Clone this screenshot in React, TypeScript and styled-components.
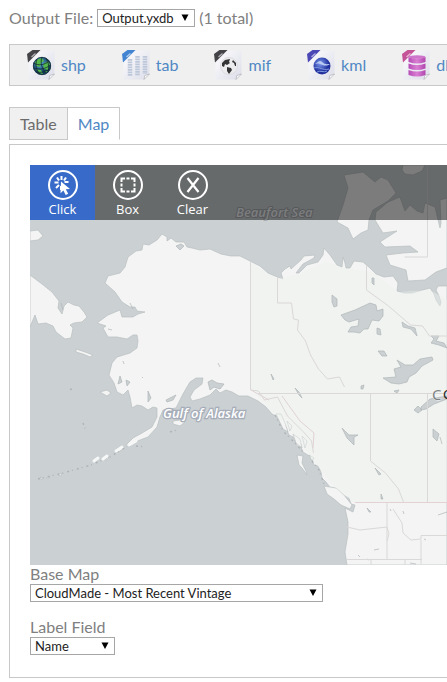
import React from "react";
import styled, { createGlobalStyle } from "styled-components";

const GlobalStyle = createGlobalStyle`
  * { box-sizing: border-box; }
  html, body { margin: 0; background: #fff; }
  body { font-family: Lato, "Liberation Sans", sans-serif; font-size: 16px; line-height: 20px; color: #808080; }
`;

const Page = styled.main`
  padding: 8px 0 4px 9px;
  overflow: hidden;
`;

const FileRow = styled.div`
  display: flex;
  align-items: center;
  gap: 4px;
  height: 20px;
  white-space: nowrap;
`;

const SelectBox = styled.span<{ $width: number }>`
  display: grid;
  grid-template-columns: 1fr 8px;
  align-items: center;
  width: ${(p) => p.$width}px;
  height: 18px;
  padding-right: 5px;
  border: 1px solid #a6a6a6;
  background: #fff;

  select {
    grid-area: 1 / 1 / 2 / 3;
    width: 100%;
    height: 16px;
    padding: 0 4px;
    border: 0;
    appearance: none;
    background: transparent;
    color: #222;
    font: 13px/16px Lato, "Liberation Sans", sans-serif;
  }
  svg {
    grid-area: 1 / 2;
    pointer-events: none;
  }
`;

const Downloads = styled.nav`
  display: flex;
  gap: 36px;
  align-items: center;
  height: 42px;
  margin-top: 16px;
  padding-left: 17px;
  border: 1px solid #c8c8c8;
  border-right: 0;
  background: #f0f0f0;
`;

const Download = styled.a`
  display: flex;
  flex: none;
  align-items: center;
  gap: 6px;
  color: #4f88c4;
  text-decoration: none;
`;

const Tabs = styled.div`
  display: flex;
  height: 33px;
  margin-top: 21px;
`;

const Tab = styled.button<{ $active?: boolean }>`
  padding: 0 10px;
  border: 1px solid #c8c8c8;
  border-bottom-color: ${(p) => (p.$active ? "#fff" : "#c8c8c8")};
  background: ${(p) => (p.$active ? "#fff" : "#f0f0f0")};
  color: ${(p) => (p.$active ? "#4f88c4" : "#6b6b6b")};
  font: inherit;
  line-height: 28px;

  & + & { border-left: 0; }
`;

const Panel = styled.section`
  margin-top: 4px;
  padding: 20px 0 22px 20px;
  border: 1px solid #c8c8c8;
  border-right: 0;
`;

const MapView = styled.div`
  position: relative;
  height: 400px;
  overflow: hidden;
  background: #cbd0d3;
`;

const MapDrawing = styled.svg`
  display: block;
  width: 100%;
  height: 100%;
`;

const MapTools = styled.div`
  position: absolute;
  inset: 0 0 auto 0;
  display: flex;
  height: 55px;
  background: rgba(3, 3, 4, 0.5);
`;

const Tool = styled.button<{ $active?: boolean }>`
  display: flex;
  flex-direction: column;
  align-items: center;
  width: 65px;
  padding: 5px 0 0;
  border: 0;
  background: ${(p) => (p.$active ? "#386bc9" : "transparent")};
  color: #fff;
  font: 13px/18px "Open Sans", "Noto Sans", sans-serif;

  svg { flex: none; }
`;

const Field = styled.div`
  display: flex;
  flex-direction: column;
  align-items: flex-start;

  & + & { margin-top: 16px; }
  label { height: 19px; line-height: 17px; }
`;

function Picker({ width, options, ...rest }: { width: number; options: string[]; id: string }) {
  return (
    <SelectBox $width={width}>
      <select {...rest}>
        {options.map((o) => <option key={o}>{o}</option>)}
      </select>
      <svg width="8" height="8" viewBox="0 0 8 8" aria-hidden="true">
        <path d="M0.5 0.5h7L4 7z" fill="#000" />
      </svg>
    </SelectBox>
  );
}

const ribbonColors: Record<string, string> = {
  shp: "#444448", tab: "#4384d2", mif: "#444448", kml: "#4b47b5", dbf: "#c45398",
};

function FileIcon({ kind }: { kind: string }) {
  const id = `page-${kind}`;
  return (
    <svg width="28" height="30" viewBox="0 0 28 30" aria-hidden="true">
      <defs>
        <linearGradient id={id} x1="0" y1="0" x2="1" y2="1">
          <stop offset="0" stopColor="#fdfdff" /><stop offset="1" stopColor="#dcdde8" />
        </linearGradient>
        <radialGradient id={`${id}-ball`} cx=".4" cy=".35">
          <stop offset="0" stopColor={kind === "kml" ? "#7f9cf0" : "#5fb2e8"} />
          <stop offset="1" stopColor={kind === "kml" ? "#202f9c" : "#123c5c"} />
        </radialGradient>
        <linearGradient id={`${id}-disk`}>
          <stop offset="0" stopColor="#b54bb4" /><stop offset=".5" stopColor="#da7fd4" /><stop offset="1" stopColor="#b044ae" />
        </linearGradient>
      </defs>
      <path d="M12 0.5H27.5V24L22 29.5H1.500V11z" fill={`url(#${id})`} />
      <path d="M27.500 24L22 29.500L22.800 25.500z" fill="#fff" stroke="#aeb0b6" strokeWidth=".7" />
      {kind === "shp" && (
        <g>
          <circle cx="15" cy="16" r="9" fill={`url(#${id}-ball)`} />
          <path d="M8 12l3-3 4-1 2 3-3 2-1 4-4-1zM16 14l5-3 2 3-2 6-4-1zM9 19l5 1 2 4-4-1zM18 21l3 0-3 2z" fill="#55b84b" />
          <path d="M6.500 13c5 3 11 2 16-2M6.500 18c6 2 12 1 17-3M9 22c5 1 10 0 13-3M10 9c-2 6-1 11 3 15M15 7c-2 6 0 12 4 16M19 8c3 5 3 9 2 14" fill="none" stroke="#102735" strokeWidth=".8" />
          <circle cx="15" cy="16" r="8.700" fill="none" stroke="#17303d" strokeWidth=".8" />
        </g>
      )}
      {kind === "tab" && (
        <g stroke="#bdc7da" strokeWidth="4.500" strokeDasharray="1.700 .8">
          <path d="M8 9v17M15.500 6v20M23 6v18" />
        </g>
      )}
      {kind === "mif" && (
        <g>
          <circle cx="15" cy="16" r="8.500" fill="#ececef" stroke="#d5d5d9" strokeWidth=".7" />
          <path d="M8 13l3-3 5-1-1 3 1 1-3 2-2-1-1 3-2-1zM13 17l4 1 1 2-3 4-2-3zM19 10l3 3 0 3-1 0-1-3-2-1z" fill="#343437" />
        </g>
      )}
      {kind === "kml" && (
        <g>
          <circle cx="15" cy="16" r="8.500" fill={`url(#${id}-ball)`} />
          <path d="M7 14c3 0 5-5 8-2s5 2 8 2c-4 3-7 1-10 0s-4 0-6 0z" fill="#b9cbf3" />
          <path d="M7 18c5-2 9 3 15 1M10 22c4-2 6 1 10-1" fill="none" stroke="#7f99df" strokeWidth="1" />
        </g>
      )}
      {kind === "dbf" && (
        <g fill={`url(#${id}-disk)`}>
          {[7, 13.500, 20].map((y) => (
            <path key={y} d={`M6.500 ${y}q8.500 3 17 0v5q-8.500 3-17 0z`} />
          ))}
          <ellipse cx="15" cy="7" rx="8.500" ry="1.800" fill="#cf74cb" />
        </g>
      )}
      <path d="M0 4L5.500 0H13.500L1 12.500z" fill={ribbonColors[kind]} />
      <path d="M4.500 7l4-3.500" stroke="#fff" strokeWidth="1.600" opacity=".55" />
    </svg>
  );
}

function ToolIcon({ kind }: { kind: string }) {
  return (
    <svg width="30" height="30" viewBox="0 0 30 30" fill="none" stroke="#fff" aria-hidden="true">
      <circle cx="15" cy="15" r="14" strokeWidth="2" />
      {kind === "Click" && (
        <g>
          <path d="M13.500 6v4M18 7.500l-2 3M20.500 12h-4M9 7.500l2 3M6.500 12.500h4M8 18l3-3M13 20v-4" strokeWidth="2" />
          <path d="M13 11.500l9 7.500-4.200.2 2.400 4.600-2.500 1.200-2.300-4.600-2.900 2.800z" fill="#fff" stroke="none" />
        </g>
      )}
      {kind === "Box" && (
        <path d="M8.500 12V8.500H12M13.500 8.500h3M18 8.500h3.500V12M21.500 13.500v3M21.500 18v3.500H18M16.500 21.500h-3M12 21.500H8.500V18M8.500 16.500v-3" strokeWidth="2" />
      )}
      {kind === "Clear" && <path d="M9.500 8l11 14M20.500 8l-11 14" strokeWidth="2.200" />}
    </svg>
  );
}

function CoastMap() {
  return (
    <MapDrawing viewBox="30 165 417 400" preserveAspectRatio="xMinYMin slice" role="img" aria-label="Map of Alaska and western Canada">
      <g fill="#f3f4f3" stroke="#b9bec0" strokeWidth=".7" strokeLinejoin="round">
        {/* mainland */}
        <path d="M162 234L167 237 167 241 171 238 176 242 184 242 187 247 192 248 200 250 210 249 221 254 231 256 240 256 252 262 260 266 268 273 275 276 283 279 281 273 285 269 290 266 291 269 301 260 304 256 315 255 314 258 303 264 296 273 299 273 307 265 318 262 323 255 324 248 330 255 337 265 342 267 343 257 345 263 346 268 350 268 354 261 363 262 370 268 376 274 384 277 393 276 398 283 397 291 404 293 412 293 430 288 434 294 436 300 440 306 441 302 439 296 436 290 438 286 447 286V565H347L345 552 348 534 348 522 345 508 353 512 355 505 351 504 349 498 339 493 332 490 326 482 322 478 321 472 318 466 314 465 311 457 303 452 301 447 297 446 293 437 289 435 286 428 281 425 276 416 272 414 266 407 258 401 248 396 239 396 232 392 226 390 220 393 216 389 210 395 200 399 192 401 190 397 194 390 202 384 203 378 196 378 190 382 187 387 183 394 179 402 176 408 163 410 160 417 157 427 148 437 140 440 133 443 127 447 127 444 133 438 142 433 152 427 157 417 157 408 153 407 148 410 142 406 137 405 132 408 130 397 128 390 123 395 117 392 114 383 109 375 112 363 117 357 130 353 137 348 138 341 137 335 133 335 127 339 117 337 108 337 103 328 106 326 97 323 108 315 120 310 122 317 133 317 138 314 145 312 137 311 135 307 130 307 122 302 115 292 105 283 108 276 120 273 125 267 128 257 136 251 142 250 143 244 149 245 157 240z" />
        {/* eastern Siberia */}
        <path d="M30 275L42 284 52 292 59 301 58 308 62 314 64 306 68 302 74 305 79 306 84 312 87 317 82 322 74 323 70 325 73 328 71 338 65 339 56 332 53 326 46 323 38 324 35 315 30 327zM30 231L38 230 43 236 38 240 30 241z" />
        {/* Bering islands */}
        <path d="M76 349l9 3 8 3-3 2-7-3-7-2zM100 392l7-2 4 3-4 3zM116 449l6-3 3 2-7 4zM94 460l4-2-2 4zM104 458l5-1-3 4zM40 477l3 1-1 2zM46 478l4-1-2 2zM58 475l4-2-1 3z" />
        <path d="M173 421l7-1 5 2-5 4-7-2z" />
        {/* Arctic islands */}
        <path d="M344 175L363 172 375 182 381 177 388 180 396 193 388 201 373 210 369 220 368 230 361 233 353 239 348 228 337 222 343 205 348 188z" />
        <path d="M403 165h22l-3 6-9 4-8-1-3-4z" />
        <path d="M447 198L440 200 441 223 440 228 435 207 425 203 423 213 417 211 410 205 405 211 400 197 388 202 376 212 375 220 383 233 397 231 383 240 380 242 385 247 410 246 418 252 403 253 386 255 390 265 406 270 408 281 425 280 436 272 447 268z" />
        {/* British Columbia islands */}
        <path d="M324 486l12 2 8 7 8 10-2 4-9-4-7-6-7-5zM297 455l6 1-1 7 4 8 1 4-5-7-3-3zM276 414l5 0 4 9 3 9-5-3zM287 421l5 5-2 5zM293 434l7 5 2 9-6-5zM302 436l5 5-2 7zM309 455l5 3-2 3z" />
      </g>
      <path d="M251 263L276 279 300 274 325 262 347 269 372 272 398 292 430 290 447 300V503H355L337 490 321 470 303 446 281 420 262 401 251 390z" fill="#edf2ee" opacity=".45" />
      {/* lakes and inlets */}
      <g fill="#cbd0d3" stroke="#b0b6b8" strokeWidth=".7" strokeLinejoin="round">
        <path d="M341 315l14-5 15-7 6 2 1 6 6-2 0 7-4 5-7-1-4 9-4 0-4 4-6-1-6 0 3-5 7-1 1-7-10 3-4-2z" />
        <path d="M383 378l13-1-2-8 7-2-4-7 8 5 8 0 7-6 12-2 1 3-11 6-6 7-7 4-2 5-8 2-8-1z" />
        <path d="M414 410l4-4 4 4-4 3zM421 407l9-8 17-3v3l-13 5-8 5-5 1zM378 351l6 0 3 5-5 0zM377 328l3 1 1 6-4-1zM332 295l5 4 0 7-3 1-2-5zM372 278l2 0 0 7-2-2zM402 322l6 4 7 2 2 8-6-7-8-2zM431 336l8 0-3 5 8 2 3 5-8-3-8-2 3-4zM361 386l3-1-1 4-2 0zM394 391l5-1-2 3zM271 374l3 5-1 1zM295 388l4 4 3 6-3-3zM342 428l7 7 9 0-4 2 0 8-7-7zM375 468l6 6-2 1zM433 429l6 5-2 7-4-4zM440 437l2 7M381 494l2 5-2 0zM367 508l4 4-2 0zM390 509l1 2M403 511l1 3M438 515l9-3M424 539l2 1M374 550l5-1M358 555l2 2M367 559l2 1M410 563l6 1" />
        <path d="M176 246l5-2 3 2-4 4zM208 382l4-2 5 3 7 1-4 5-6-2-4 3zM120 376l2 6-4 2zM126 380l4 2-3 4zM148 391l3 7-3 4zM166 400l10-5-3 5-6 2zM218 363l2 4M123 361l1 3M142 377l1 1M61 303l2 7M108 329l4 1M130 303l3 6" />
      </g>
      {/* inland borders */}
      <g fill="none" stroke="#dbd8d8" strokeWidth="1">
        <path d="M250.500 262V390l8 1 6 9 13-3 10 19 17 17 7 8 2 12M258 393.500H447M277.500 277v26h14l2 16 5 1-1 10 8 11 5 14 8 14 9 10 12-2 5 10M366.500 265v25l22 16 22 19 12 1 7 10h17M370.500 393v68l15 12 13 16 5 13M427.500 393v109M347 527l13 3 27-3 0 32M387 503v24l2 7-2 7M393 509l9 14 1 10 8 7 10-1V535.500h26M421 540v24M347 559.500h75M371 560v5M405 560v5M427.500 165v92h-23" />
        <path d="M355 502.500h92M251 390l18 10M282 396l18 25 14 12-1 15" stroke="#e2d2d5" />
      </g>
      {/* chains of small islands */}
      <g fill="none" stroke="#aeb3b5" strokeWidth="1.400" strokeDasharray="2 3 1 4">
        <path d="M38 479l25-6 28-8 19-8 14-9M136 446l9 1M170 432l7-2M70 389l4 1M83 423l3 8" />
        <path d="M275 415l8 16 9 9 12 13M312 461l7 9 5 14" />
      </g>
      <path d="M94 461l4-3M103 459l4-3M116 451l6-4M129 445l7-4" fill="none" stroke="#f6f7f7" strokeWidth="3" strokeLinecap="round" />
      <g fontFamily="Open Sans, Noto Sans, sans-serif" fontSize="13" fontStyle="italic" fontWeight="600">
        <text x="163" y="418" fill="#fff" stroke="#a6adb9" strokeWidth="2.500" paintOrder="stroke">Gulf of Alaska</text>
        <text x="236" y="217" fill="#f4f6f8" stroke="#a6abb0" strokeWidth="2" paintOrder="stroke">Beaufort Sea</text>
      </g>
      <g fontFamily="Noto Sans, sans-serif" fontSize="15">
        <text x="432" y="400" fill="#7d8284" stroke="#f3f4f3" strokeWidth="1" paintOrder="stroke">C</text>
        <text x="443" y="399" fill="#222" fontSize="13">C</text>
      </g>
    </MapDrawing>
  );
}

export default function App() {
  return (
    <>
      <GlobalStyle />
      <Page>
        <FileRow>
          <label htmlFor="output-file">Output File:</label>
          <Picker id="output-file" width={98} options={["Output.yxdb"]} />
          <span>(1 total)</span>
        </FileRow>
        <Downloads aria-label="Downloads">
          {["shp", "tab", "mif", "kml", "dbf"].map((kind) => (
            <Download key={kind} href={`#${kind}`}>
              <FileIcon kind={kind} />
              {kind}
            </Download>
          ))}
        </Downloads>
        <Tabs role="tablist">
          <Tab role="tab" aria-selected={false}>Table</Tab>
          <Tab role="tab" aria-selected $active>Map</Tab>
        </Tabs>
        <Panel>
          <MapView>
            <CoastMap />
            <MapTools>
              {["Click", "Box", "Clear"].map((name) => (
                <Tool key={name} type="button" $active={name === "Click"}>
                  <ToolIcon kind={name} />
                  {name}
                </Tool>
              ))}
            </MapTools>
          </MapView>
          <Field>
            <label htmlFor="base-map">Base Map</label>
            <Picker id="base-map" width={293} options={["CloudMade - Most Recent Vintage"]} />
          </Field>
          <Field>
            <label htmlFor="label-field">Label Field</label>
            <Picker id="label-field" width={85} options={["Name"]} />
          </Field>
        </Panel>
      </Page>
    </>
  );
}
